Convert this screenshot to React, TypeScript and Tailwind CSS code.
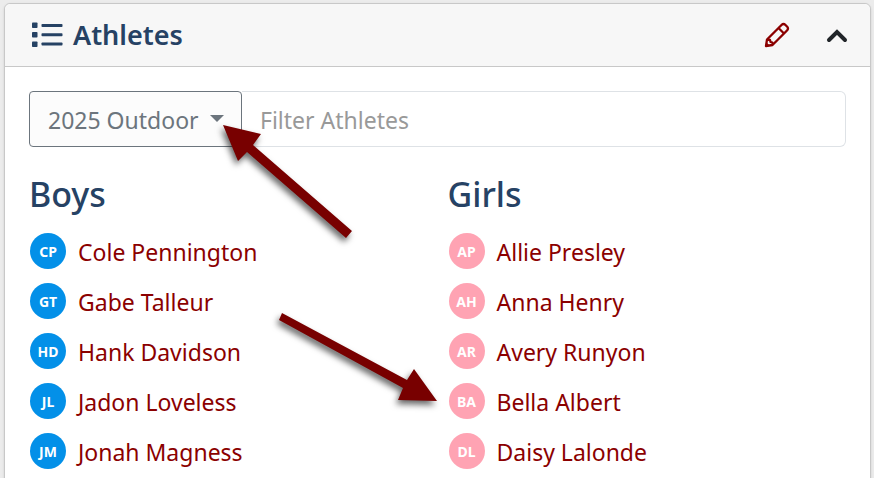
import { useState } from 'react'

type Athlete = { name: string; initials: string }

const boys: Athlete[] = [
  { name: 'Cole Pennington', initials: 'CP' },
  { name: 'Gabe Talleur', initials: 'GT' },
  { name: 'Hank Davidson', initials: 'HD' },
  { name: 'Jadon Loveless', initials: 'JL' },
  { name: 'Jonah Magness', initials: 'JM' },
]

const girls: Athlete[] = [
  { name: 'Allie Presley', initials: 'AP' },
  { name: 'Anna Henry', initials: 'AH' },
  { name: 'Avery Runyon', initials: 'AR' },
  { name: 'Bella Albert', initials: 'BA' },
  { name: 'Daisy Lalonde', initials: 'DL' },
]

function ListIcon() {
  return (
    <svg width="32" height="26" viewBox="0 0 32 26" fill="currentColor" aria-hidden="true">
      <rect x="1" y="0.500" width="5.500" height="5.500" rx="0.8" />
      <rect x="1" y="10" width="5.500" height="5.500" rx="0.8" />
      <rect x="1" y="19.500" width="5.500" height="5.500" rx="0.8" />
      <rect x="10.500" y="2" width="21" height="3" rx="0.8" />
      <rect x="10.500" y="11.200" width="21" height="3" rx="0.8" />
      <rect x="10.500" y="20.500" width="21" height="3" rx="0.8" />
    </svg>
  )
}

function PencilIcon() {
  return (
    <svg width="26" height="26" viewBox="0 0 26 26" fill="none" stroke="currentColor" strokeWidth="2.3" strokeLinejoin="round" aria-hidden="true">
      <path d="M2 24 L3 17.500 L17.500 3 Q19.500 1 21.500 3 L23 4.500 Q25 6.500 23 8.500 L8.500 23 Z" />
      <path d="M14.500 6 L20 11.500" />
      <path d="M3.500 17.500 L6 18 L6.500 20 L8.500 20.500 V23" />
      <path d="M2 24 L2.500 21 L5 23.500 Z" fill="currentColor" strokeWidth="1" />
    </svg>
  )
}

function AthleteList({ title, athletes, badge }: { title: string; athletes: Athlete[]; badge: string }) {
  return (
    <section>
      <h3 className="text-[34px] leading-[46px] font-medium text-[#264264]">{title}</h3>
      <ul className="mt-4 flex flex-col gap-3.5 pl-px">
        {athletes.map((athlete) => (
          <li key={athlete.name}>
            <a href="#" className="flex h-9 items-center gap-3 text-[#8b0000]">
              <span className={`flex size-9 shrink-0 items-center justify-center rounded-full pt-0.5 text-sm font-bold text-white ${badge}`}>
                {athlete.initials}
              </span>
              <span className="pt-0.5 text-[23px] leading-9">{athlete.name}</span>
            </a>
          </li>
        ))}
      </ul>
    </section>
  )
}

export default function App() {
  const [season, setSeason] = useState('2025 Outdoor')
  const [open, setOpen] = useState(true)
  const [filter, setFilter] = useState('')

  const matching = (list: Athlete[]) =>
    list.filter((a) => a.name.toLowerCase().includes(filter.toLowerCase()))

  return (
    <main className="relative min-h-screen overflow-hidden bg-[#ececec] pt-[3px] pr-[3px] pl-1 font-['Noto_Sans','Segoe_UI',sans-serif]">
      <div className="min-h-screen rounded-t-md border border-[#c8c8c8] bg-white shadow-sm">
        <header className="flex items-center justify-between rounded-t-md border-b border-[#c8c8c8] bg-[#f7f7f7] py-2 pr-[22px] pl-[26px]">
          <h2 className="flex items-center gap-2.5 text-[27px] leading-[46px] font-semibold text-[#264264]">
            <ListIcon />
            Athletes
          </h2>
          <div className="flex items-center gap-9">
            <button type="button" aria-label="Edit athletes" className="text-[#8b0000]">
              <PencilIcon />
            </button>
            <button type="button" aria-label="Toggle athletes" aria-expanded={open} onClick={() => setOpen(!open)} className="text-[#212529]">
              <svg width="22" height="26" viewBox="0 0 22 26" fill="none" stroke="currentColor" strokeWidth="4" strokeLinecap="round" aria-hidden="true">
                <path d="M3 18 L11 10 L19 18" />
              </svg>
            </button>
          </div>
        </header>

        {open && (
          <div className="p-6">
            <div className="flex h-14 text-[23px]">
              <div className="relative shrink-0">
                <select
                  aria-label="Season"
                  value={season}
                  onChange={(e) => setSeason(e.target.value)}
                  className="h-full w-[213px] appearance-none rounded-sm border border-[#6c757d] bg-[#fcfcfc] pt-0.5 pr-10 pl-[18px] text-[#6c757d]"
                >
                  <option>2025 Outdoor</option>
                  <option>2025 Indoor</option>
                </select>
                <svg className="pointer-events-none absolute top-6 right-[18px]" width="14" height="7" viewBox="0 0 14 7" fill="#6c757d" aria-hidden="true">
                  <path d="M0 0 H14 L7 7 Z" />
                </svg>
              </div>
              <input
                type="text"
                aria-label="Filter Athletes"
                placeholder="Filter Athletes"
                value={filter}
                onChange={(e) => setFilter(e.target.value)}
                className="min-w-0 flex-1 rounded-r-md border border-l-0 border-[#dee2e6] bg-white px-[18px] pt-0.5 text-[#212529] placeholder:text-[#999999]"
              />
            </div>

            <div className="mt-6 grid grid-cols-2 gap-5">
              <AthleteList title="Boys" athletes={matching(boys)} badge="bg-[#0390e8]" />
              <AthleteList title="Girls" athletes={matching(girls)} badge="bg-[#ffa3b3]" />
            </div>
          </div>
        )}
      </div>

      {/* Callout arrows */}
      <svg
        className="pointer-events-none absolute top-0 left-0 drop-shadow-[-2px_4px_3px_rgba(0,0,0,0.6)]"
        width="460"
        height="420"
        viewBox="0 0 460 420"
        fill="#780000"
        aria-hidden="true"
      >
        <path d="M223 125 L261 134 L253 145 L352 231 L346 238 L247 152 L238 161 Z" />
        <path d="M282 313 L407 380 L414 369 L437 401 L398 400 L403 388 L279 320 Z" />
      </svg>
    </main>
  )
}
